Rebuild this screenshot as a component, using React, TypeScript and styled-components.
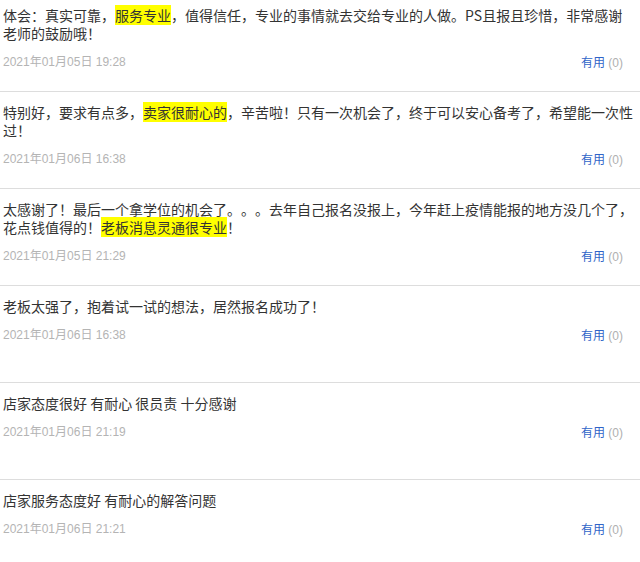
import React from "react";
import styled, { createGlobalStyle } from "styled-components";

const GlobalStyle = createGlobalStyle`
  html, body {
    margin: 0;
    padding: 0;
    background: #ffffff;
  }
  body {
    font-family: "Noto Sans CJK SC", "Liberation Sans", sans-serif;
    overflow: hidden;
  }
`;

const List = styled.div`
  width: 640px;
  margin-top: -5px;
`;

const Item = styled.div`
  box-sizing: border-box;
  height: 97px;
  padding: 11px 6px 0 3px;
  border-bottom: 1px solid #dddddd;
`;

const Content = styled.p`
  margin: 0;
  font-family: "Noto Sans CJK SC", sans-serif;
  font-size: 14px;
  line-height: 18px;
  color: #333333;
  word-break: break-all;
  text-spacing-trim: space-all;
  font-kerning: none;
  font-feature-settings: "halt" 0, "palt" 0;
`;

const Mark = styled.span`
  background: #ffff00;
`;

const Meta = styled.div`
  display: flex;
  justify-content: space-between;
  align-items: center;
  margin-top: 11px;
  padding-right: 11px;
  height: 18px;
  line-height: 18px;
  font-size: 12px;
  font-family: "Liberation Sans", "Noto Sans CJK SC", sans-serif;
`;

const DateText = styled.span`
  color: #b4b4b4;
`;

const Useful = styled.span`
  color: #2f64c8;
  font-family: "Noto Sans CJK SC", sans-serif;
`;

const Count = styled.span`
  color: #b0b0b0;
  font-family: "Liberation Sans", sans-serif;
`;

type Review = {
  parts: { text: string; mark?: boolean }[];
  date: string;
};

const reviews: Review[] = [
  {
    parts: [
      { text: "体会：真实可靠，" },
      { text: "服务专业", mark: true },
      { text: "，值得信任，专业的事情就去交给专业的人做。PS且报且珍惜，非常感谢老师的鼓励哦！" },
    ],
    date: "2021年01月05日 19:28",
  },
  {
    parts: [
      { text: "特别好，要求有点多，" },
      { text: "卖家很耐心的", mark: true },
      { text: "，辛苦啦！只有一次机会了，终于可以安心备考了，希望能一次性过！" },
    ],
    date: "2021年01月06日 16:38",
  },
  {
    parts: [
      { text: "太感谢了！最后一个拿学位的机会了。。。去年自己报名没报上，今年赶上疫情能报的地方没几个了，花点钱值得的！" },
      { text: "老板消息灵通很专业", mark: true },
      { text: "！" },
    ],
    date: "2021年01月05日 21:29",
  },
  {
    parts: [{ text: "老板太强了，抱着试一试的想法，居然报名成功了！" }],
    date: "2021年01月06日 16:38",
  },
  {
    parts: [{ text: "店家态度很好 有耐心 很员责 十分感谢" }],
    date: "2021年01月06日 21:19",
  },
  {
    parts: [{ text: "店家服务态度好 有耐心的解答问题" }],
    date: "2021年01月06日 21:21",
  },
];

export default function App() {
  return (
    <>
      <GlobalStyle />
      <List>
        {reviews.map((r, i) => (
          <Item key={i}>
            <Content>
              {r.parts.map((p, j) =>
                p.mark ? <Mark key={j}>{p.text}</Mark> : <React.Fragment key={j}>{p.text}</React.Fragment>
              )}
            </Content>
            <Meta>
              <DateText>{r.date}</DateText>
              <span>
                <Useful>有用</Useful> <Count>(0)</Count>
              </span>
            </Meta>
          </Item>
        ))}
      </List>
    </>
  );
}
